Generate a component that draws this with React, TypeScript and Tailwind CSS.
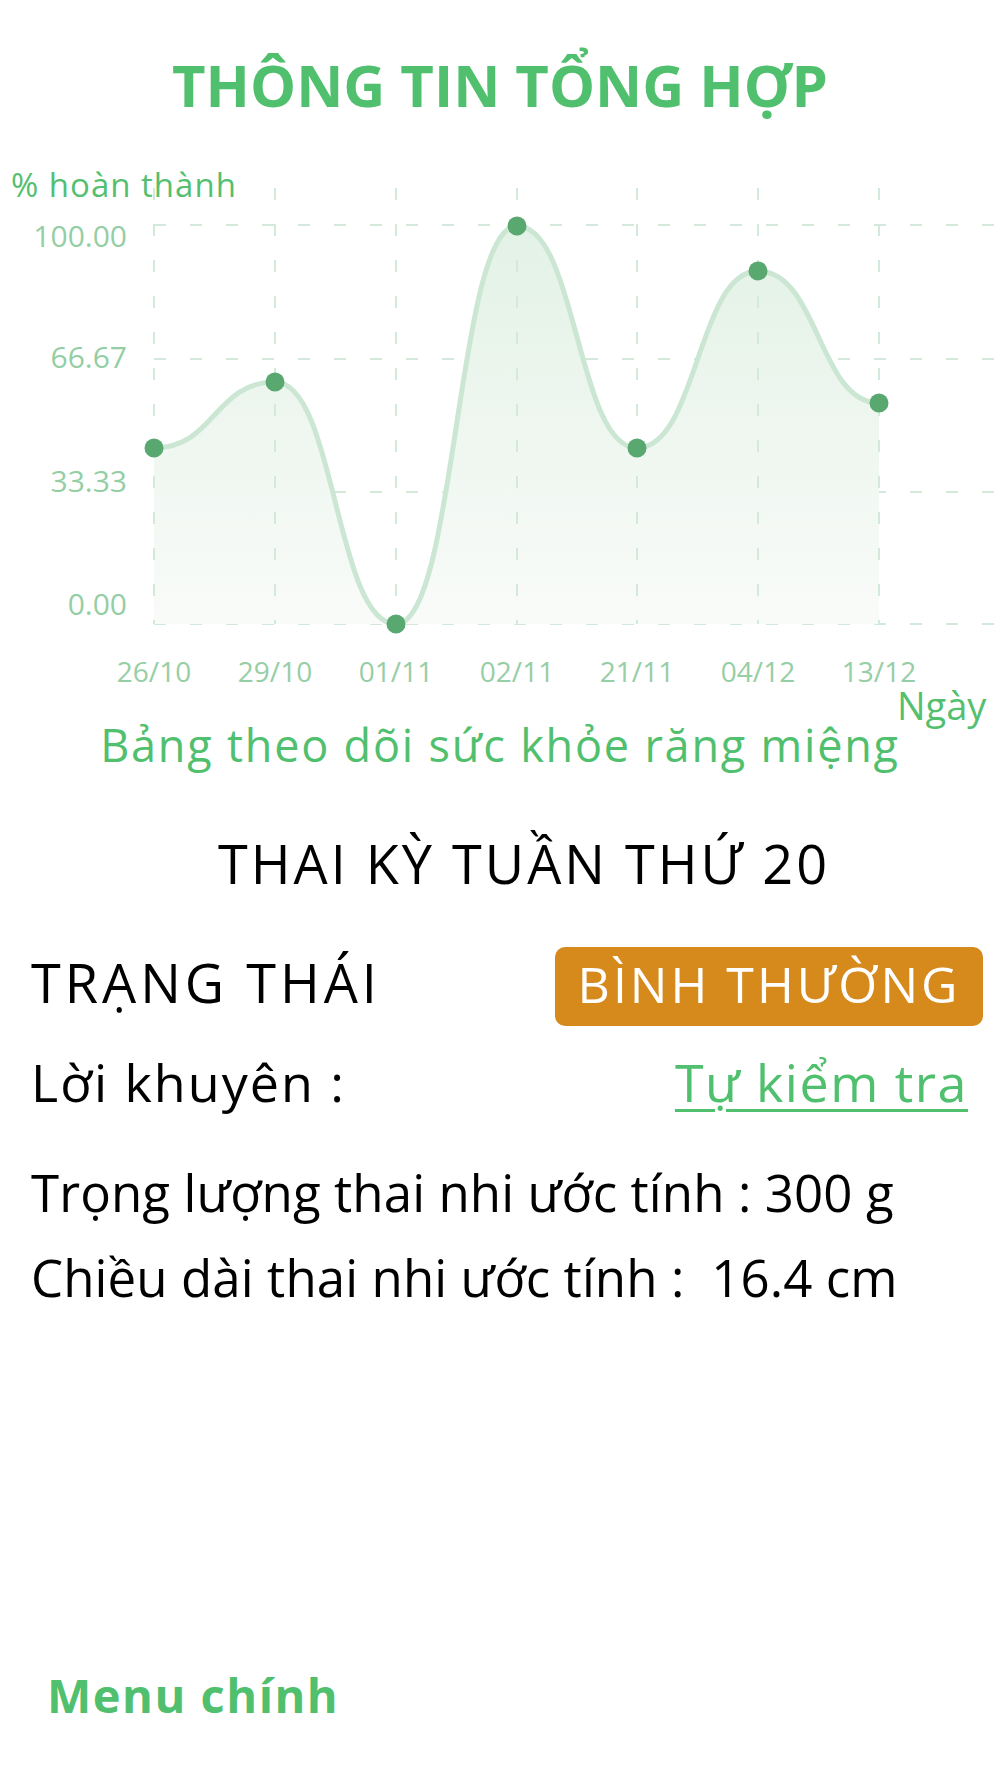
import React from "react"

const xs = [154, 275, 396, 517, 637, 758, 879]
const ys = [448, 382, 624, 226, 448, 271, 403]
const dates = ["26/10", "29/10", "01/11", "02/11", "21/11", "04/12", "13/12"]
const yTicks = [
  { label: "100.00", grid: 225, base: 247 },
  { label: "66.67", grid: 359, base: 368 },
  { label: "33.33", grid: 492, base: 492 },
  { label: "0.00", grid: 624, base: 615 },
]

function curvePath() {
  let d = `M ${xs[0]} ${ys[0]}`
  for (let i = 1; i < xs.length; i++) {
    const mx = (xs[i - 1] + xs[i]) / 2
    d += ` C ${mx} ${ys[i - 1]}, ${mx} ${ys[i]}, ${xs[i]} ${ys[i]}`
  }
  return d
}

function HealthChart() {
  const line = curvePath()
  const area = `${line} L ${xs[xs.length - 1]} 624 L ${xs[0]} 624 Z`
  return (
    <svg
      className="block overflow-visible mt-[36px] shrink-0"
      width={1000}
      height={573}
      viewBox="0 150 1000 573"
      style={{ fontFamily: '"Open Sans", sans-serif' }}
    >
      <defs>
        <linearGradient id="areaFill" x1="0" y1="226" x2="0" y2="624" gradientUnits="userSpaceOnUse">
          <stop offset="0" stopColor="#e3f2e6" />
          <stop offset="1" stopColor="#f9fbf9" />
        </linearGradient>
      </defs>

      <text x={11} y={197} fontSize={33} fill="#55bf70" letterSpacing={1}>
        % hoàn thành
      </text>

      {/* grid */}
      {yTicks.map((t) => (
        <line key={t.label} x1={154} x2={1000} y1={t.grid} y2={t.grid} stroke="#d3eada" strokeWidth={2} strokeDasharray="12 24" />
      ))}

      <path d={area} fill="url(#areaFill)" />

      {xs.map((x) => (
        <line key={x} x1={x} x2={x} y1={188} y2={624} stroke="#d3eada" strokeWidth={2} strokeDasharray="12 24" />
      ))}

      <path d={line} fill="none" stroke="#cbe6d2" strokeWidth={5} strokeLinecap="round" />

      {xs.map((x, i) => (
        <circle key={x} cx={x} cy={ys[i]} r={9.5} fill="#59a870" />
      ))}

      {yTicks.map((t) => (
        <text key={t.label} x={127} y={t.base} fontSize={30} fill="#94cea4" textAnchor="end">
          {t.label}
        </text>
      ))}

      {dates.map((d, i) => (
        <text key={d} x={xs[i]} y={682} fontSize={28} fill="#96cea5" textAnchor="middle">
          {d}
        </text>
      ))}

      <text x={897} y={720} fontSize={38} fill="#55bf70">
        Ngày
      </text>
    </svg>
  )
}

export default function App() {
  return (
    <div className="w-[1000px] h-[1778px] bg-white flex flex-col text-black font-['Open_Sans',sans-serif]">
      {/* Heading */}
      <h1 className="pt-[56px] text-center text-[58px] leading-[58px] font-bold text-[#51c06e]">
        THÔNG TIN TỔNG HỢP
      </h1>

      <HealthChart />

      <p className="text-center text-[45px] leading-[44px] tracking-[1.8px] text-[#51c06e]">
        Bảng theo dõi sức khỏe răng miệng
      </p>

      <h2 className="mt-[69px] pl-[48px] text-center text-[54px] leading-[54px] tracking-[3px]">
        THAI KỲ TUẦN THỨ 20
      </h2>

      {/* Status */}
      <div className="mt-[57px] flex items-start justify-between pl-[31px] pr-[17px]">
        <span className="mt-[8px] text-[54px] leading-[54px] tracking-[4px]">TRẠNG THÁI</span>
        <span className="h-[79px] w-[428px] rounded-[10px] bg-[#d68a1c] pt-[12px] text-center text-[50px] leading-[50px] tracking-[3px] text-white">
          BÌNH THƯỜNG
        </span>
      </div>

      <div className="mt-[30px] flex items-start justify-between pl-[31px] pr-[32px]">
        <span className="text-[52px] leading-[52px] tracking-[2px]">Lời khuyên :</span>
        <a className="text-[52px] leading-[52px] tracking-[1.5px] text-[#51c06e] underline decoration-[3px] underline-offset-[7px]">
          Tự kiểm tra
        </a>
      </div>

      <div className="pl-[31px] text-[51px] leading-[51px]">
        <p className="mt-[59px] tracking-[0.1px]">Trọng lượng thai nhi ước tính : 300 g</p>
        <p className="mt-[34px] tracking-[0.1px] whitespace-pre">Chiều dài thai nhi ước tính :  16.4 cm</p>
      </div>

      <button className="mt-auto mb-[60px] self-start pl-[47px] text-[47px] leading-[46px] font-bold tracking-[1.5px] text-[#51c06e]">
        Menu chính
      </button>
    </div>
  )
}
